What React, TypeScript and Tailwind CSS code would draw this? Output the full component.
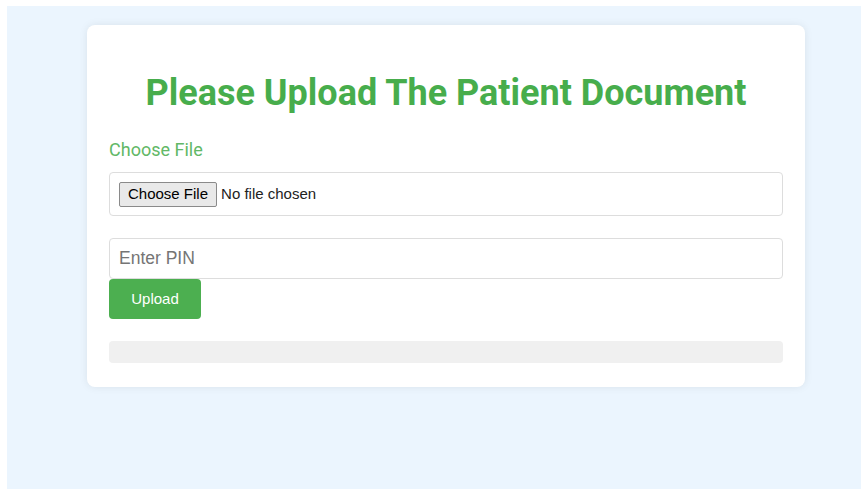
export default function App() {
  return (
    <div className="w-[861px] h-[489px] bg-white pt-[6px] pl-[7px]">
      <div className="h-[483px] bg-[#ebf5fe] pt-[19px] pl-[80px]">
        <div className="w-[718px] rounded-[8px] bg-white px-[22px] pt-[47px] pb-[24px] shadow-[0_0_8px_rgba(0,0,0,0.08)]">
          <h1 className="text-center font-['Roboto',sans-serif] text-[36px] font-bold leading-[42px] text-[#47ad4c]">
            Please Upload The Patient Document
          </h1>
          <div className="mt-[25px] font-['Roboto',sans-serif] text-[18px] leading-[22px] text-[#62b866]">
            Choose File
          </div>
          <div className="mt-[11px] flex h-[44px] items-center rounded-[4px] border border-[#dddddd] px-[9px] font-['Liberation_Sans',Arial,sans-serif] text-[15px] text-[#222]">
            <span className="flex h-[25px] items-center rounded-[2px] border border-[#8a8a8a] bg-[#e9e9e9] px-[8px] text-[15px] text-black">
              Choose File
            </span>
            <span className="ml-[4px]">No file chosen</span>
          </div>
          <input
            className="mt-[22px] block h-[41px] w-full rounded-[4px] border border-[#dddddd] px-[9px] font-['Liberation_Sans',Arial,sans-serif] text-[17.5px] text-[#333] outline-none placeholder:text-[#757575]"
            placeholder="Enter PIN"
          />
          <button className="flex h-[40px] w-[92px] items-center justify-center rounded-[4px] bg-[#4caf50] font-['Liberation_Sans',Arial,sans-serif] text-[15px] text-white">
            Upload
          </button>
          <div className="mt-[22px] h-[22px] rounded-[4px] bg-[#f0f0f0]" />
        </div>
      </div>
    </div>
  );
}
